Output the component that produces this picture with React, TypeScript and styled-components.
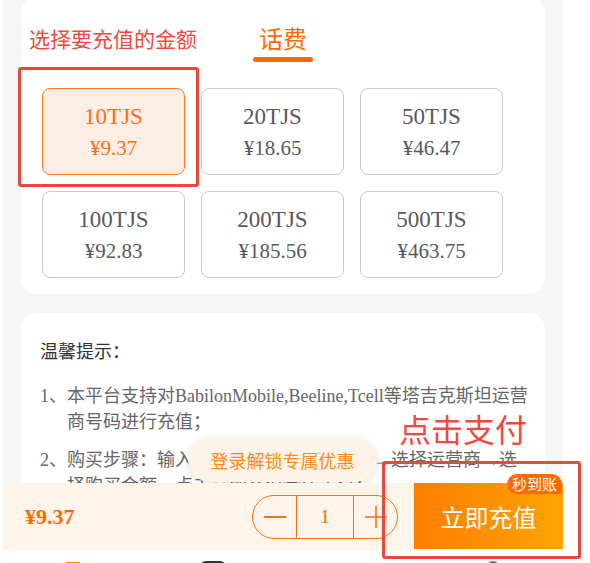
import React, { useState } from "react";
import styled, { createGlobalStyle, css } from "styled-components";

const GlobalStyle = createGlobalStyle`
  html, body {
    margin: 0;
    padding: 0;
    background: #ffffff;
  }
  * {
    box-sizing: border-box;
  }
`;

const SERIF = `"Liberation Serif", "Noto Sans CJK SC", serif`;
const SANS = `"Noto Sans CJK SC", "Noto Sans", sans-serif`;

const options = [
  { amount: "10TJS", price: "¥9.37" },
  { amount: "20TJS", price: "¥18.65" },
  { amount: "50TJS", price: "¥46.47" },
  { amount: "100TJS", price: "¥92.83" },
  { amount: "200TJS", price: "¥185.56" },
  { amount: "500TJS", price: "¥463.75" },
];

const tips = [
  ["1、", ["本平台支持对BabilonMobile,Beeline,Tcell等塔吉克斯坦运营", "商号码进行充值；"]],
  ["2、", ["购买步骤：输入充值的塔吉克斯坦号码→选择运营商→选", "择购买金额，点击立即充值完成支付；"]],
] as const;

const App = () => {
  const [selected, setSelected] = useState(0);
  const [count, setCount] = useState(1);

  return (
    <Frame>
      <GlobalStyle />
      <Screen>
        <AmountCard>
          <TabRow>
            <Tab>
              话费
              <TabLine />
            </Tab>
          </TabRow>
          <OptionGrid>
            {options.map((o, i) => (
              <Option key={o.amount} $active={selected === i} onClick={() => setSelected(i)}>
                <Amount>{o.amount}</Amount>
                <Price>{o.price}</Price>
              </Option>
            ))}
          </OptionGrid>
        </AmountCard>

        <TipCard>
          <TipTitle>温馨提示：</TipTitle>
          {tips.map(([num, lines]) => (
            <TipItem key={num}>
              <TipNum>{num}</TipNum>
              <TipText>
                {lines.map((l) => (
                  <TipLine key={l}>{l}</TipLine>
                ))}
              </TipText>
            </TipItem>
          ))}
        </TipCard>
      </Screen>

      <LoginPill>登录解锁专属优惠</LoginPill>

      <Dock>
        <PayBar>
          <Total>{options[selected].price}</Total>
          <Stepper>
            <StepBtn onClick={() => setCount(Math.max(1, count - 1))}>
              <svg width="24" height="24" viewBox="0 0 24 24">
                <line x1="1" y1="12" x2="23" y2="12" stroke="#ff7012" strokeWidth="2" />
              </svg>
            </StepBtn>
            <StepValue>{count}</StepValue>
            <StepBtn onClick={() => setCount(count + 1)}>
              <svg width="24" height="24" viewBox="0 0 24 24">
                <line x1="1" y1="12" x2="23" y2="12" stroke="#ff7012" strokeWidth="1.6" />
                <line x1="12" y1="1" x2="12" y2="23" stroke="#ff7012" strokeWidth="1.6" />
              </svg>
            </StepBtn>
          </Stepper>
          <PayButton>
            立即充值
            <Badge>秒到账</Badge>
          </PayButton>
        </PayBar>
        <TabBar>
          <TabIcon>
            <svg width="22" height="22" viewBox="0 0 22 22">
              <rect x="2" y="1" width="18" height="18" rx="4" fill="#ff8a00" />
            </svg>
          </TabIcon>
          <TabIcon>
            <svg width="28" height="22" viewBox="0 0 28 22">
              <rect x="1" y="0" width="26" height="20" rx="6" fill="#333" />
            </svg>
          </TabIcon>
          <TabIcon />
          <TabIcon>
            <svg width="14" height="22" viewBox="0 0 14 22">
              <circle cx="7" cy="7" r="6" fill="none" stroke="#777" strokeWidth="2" />
            </svg>
          </TabIcon>
        </TabBar>
      </Dock>

      <NoteText $left={29} $top={24} $size={21}>
        选择要充值的金额
      </NoteText>
      <NoteBox $left={18} $top={67} $w={181} $h={120} />
      <NoteText $left={399} $top={406} $size={32}>
        点击支付
      </NoteText>
      <NoteBox $left={382} $top={461} $w={199} $h={98} />
    </Frame>
  );
};

export default App;

const Frame = styled.div`
  position: relative;
  width: 590px;
  height: 563px;
  overflow: hidden;
  background: #fff;
`;

const Screen = styled.div`
  width: 560px;
  height: 100%;
  margin-left: 3px;
  padding: 0 18px;
  background: #f6f6f6;
  display: flex;
  flex-direction: column;
`;

const AmountCard = styled.section`
  margin-top: -3px;
  padding: 26px 21px 16px;
  background: #fff;
  border-radius: 16px;
`;

const TabRow = styled.div`
  display: flex;
  justify-content: center;
`;

const Tab = styled.div`
  display: flex;
  flex-direction: column;
  align-items: center;
  font-family: ${SANS};
  font-size: 24px;
  line-height: 30px;
  color: #ff6a00;
`;

const TabLine = styled.div`
  width: 60px;
  height: 5px;
  margin-top: 4px;
  border-radius: 3px;
  background: #ff6a00;
`;

const OptionGrid = styled.div`
  display: grid;
  grid-template-columns: repeat(3, 143px);
  gap: 16px;
  margin-top: 26px;
`;

const Option = styled.div<{ $active: boolean }>`
  height: 87px;
  display: flex;
  flex-direction: column;
  align-items: center;
  justify-content: center;
  gap: 4px;
  border: 1px solid #c9c9c9;
  border-radius: 8px;
  color: #5a5a5a;
  font-family: ${SERIF};
  cursor: pointer;

  ${(p) =>
    p.$active &&
    css`
      background: #fdeee3;
      border-color: #ff7a22;
      color: #ff6d1c;
    `}
`;

const Amount = styled.div`
  font-size: 23px;
  line-height: 28px;
`;

const Price = styled.div`
  font-size: 21px;
  line-height: 26px;
`;

const TipCard = styled.section`
  margin-top: 19px;
  padding: 24px 19px 30px;
  background: #fff;
  border-radius: 16px;
`;

const TipTitle = styled.div`
  font-family: ${SANS};
  font-size: 18px;
  line-height: 26px;
  color: #333;
  margin-bottom: 20px;
`;

const TipItem = styled.div`
  display: flex;
  font-family: ${SERIF};
  font-size: 18px;
  line-height: 26px;
  color: #666;
  margin-bottom: 12px;
`;

const TipNum = styled.span`
  flex: none;
  width: 27px;
  white-space: nowrap;
`;

const TipText = styled.div`
  display: flex;
  flex-direction: column;
`;

const TipLine = styled.span`
  white-space: nowrap;
`;

const LoginPill = styled.div`
  position: absolute;
  left: 188px;
  top: 438px;
  width: 189px;
  height: 44px;
  border-radius: 22px;
  background: #fdf3e8;
  box-shadow: 0 2px 8px rgba(0, 0, 0, 0.12);
  display: flex;
  align-items: center;
  justify-content: center;
  font-family: ${SANS};
  font-size: 18px;
  color: #ff8a1c;
`;

const Dock = styled.div`
  position: absolute;
  left: 3px;
  top: 483px;
  width: 560px;
`;

const PayBar = styled.div`
  height: 67px;
  display: flex;
  align-items: center;
  padding-left: 22px;
  background: #fdf4ea;
`;

const Total = styled.div`
  flex: 1;
  font-family: ${SERIF};
  font-weight: bold;
  font-size: 22px;
  color: #ff6a00;
`;

const Stepper = styled.div`
  width: 146px;
  height: 44px;
  margin-right: 16px;
  display: flex;
  border: 1.5px solid #ff7012;
  border-radius: 22px;
  overflow: hidden;
`;

const StepBtn = styled.div`
  width: 43px;
  display: flex;
  align-items: center;
  justify-content: center;
  cursor: pointer;
`;

const StepValue = styled.div`
  flex: 1;
  display: flex;
  align-items: center;
  justify-content: center;
  border-left: 1.5px solid #ff7012;
  border-right: 1.5px solid #ff7012;
  font-family: ${SERIF};
  font-size: 19px;
  color: #ff6a00;
`;

const PayButton = styled.div`
  position: relative;
  align-self: flex-start;
  width: 149px;
  height: 66px;
  display: flex;
  align-items: center;
  justify-content: center;
  background: linear-gradient(90deg, #ff7e00, #ffa400);
  font-family: ${SANS};
  font-size: 24px;
  color: #fff;
`;

const Badge = styled.span`
  position: absolute;
  right: 1px;
  top: -9px;
  height: 20px;
  padding: 0 5px;
  border-radius: 10px 10px 0 10px;
  background: #ff6a00;
  font-size: 15px;
  line-height: 20px;
  color: #fff;
`;

const TabBar = styled.div`
  display: flex;
  height: 50px;
  background: #fff;
  padding-top: 11px;
`;

const TabIcon = styled.div`
  flex: 1;
  display: flex;
  justify-content: center;
`;

const NoteText = styled.div<{ $left: number; $top: number; $size: number }>`
  position: absolute;
  left: ${(p) => p.$left}px;
  top: ${(p) => p.$top}px;
  font-family: ${SANS};
  font-size: ${(p) => p.$size}px;
  line-height: 1.4;
  color: #f3483f;
  white-space: nowrap;
`;

const NoteBox = styled.div<{ $left: number; $top: number; $w: number; $h: number }>`
  position: absolute;
  left: ${(p) => p.$left}px;
  top: ${(p) => p.$top}px;
  width: ${(p) => p.$w}px;
  height: ${(p) => p.$h}px;
  border: 3px solid #e9493c;
  border-radius: 3px;
`;
